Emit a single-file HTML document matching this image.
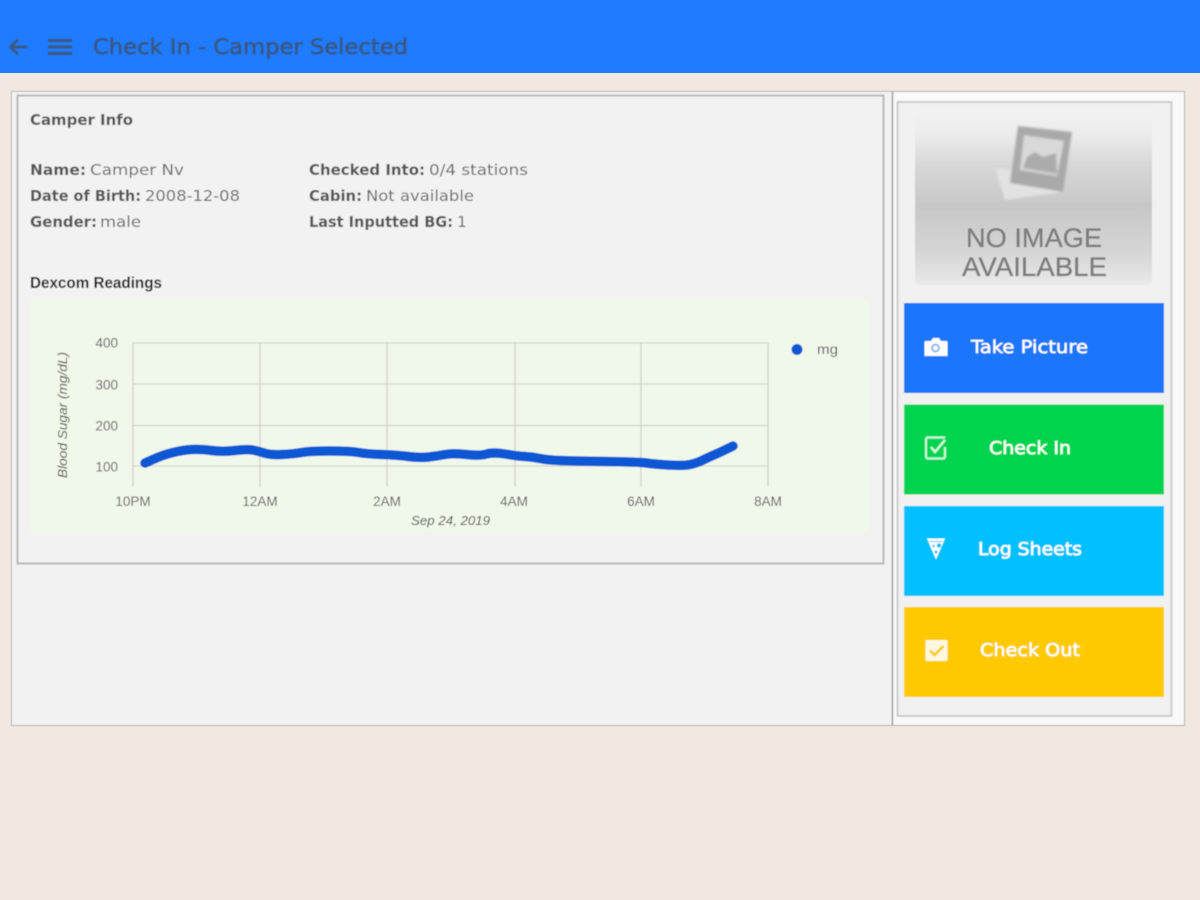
<!DOCTYPE html>
<html><head><meta charset="utf-8"><title>Check In - Camper Selected</title>
<style>html,body{margin:0;padding:0;background:#f1e9df;width:1200px;height:900px;overflow:hidden}svg{display:block}
.m{font-family:"DejaVu Sans","Liberation Sans",sans-serif}
.a{font-family:"Liberation Sans",sans-serif}
</style></head><body>
<svg width="1200" height="900" viewBox="0 0 1200 900" xmlns="http://www.w3.org/2000/svg">
<defs>
<filter id="b" x="-5%" y="-5%" width="110%" height="110%"><feGaussianBlur stdDeviation="0.55"/></filter>
<filter id="b2" x="-10%" y="-10%" width="120%" height="120%"><feGaussianBlur stdDeviation="1"/></filter>
<linearGradient id="g" x1="0" y1="0" x2="0" y2="1"><stop offset="0" stop-color="#f3f3f3"/><stop offset=".17" stop-color="#eaeaea"/><stop offset=".3" stop-color="#d9d9d9"/><stop offset=".55" stop-color="#c8c8c8"/><stop offset=".8" stop-color="#d4d4d4"/><stop offset="1" stop-color="#e9e9e9"/></linearGradient>
</defs>
<rect width="1200" height="900" fill="#f1e9df"/>
<rect width="1200" height="73" fill="#1f7bff"/>
<g filter="url(#b)">
<!-- header -->
<path d="M27 47H11M18 39.500l-7.500 7.500 7.500 7.500" fill="none" stroke="#3d5880" stroke-width="2.800"/>
<path d="M48 40.500H72M48 47H72M48 53.500H72" stroke="#3d5880" stroke-width="3"/>
<text x="93" y="54" class="m" font-size="21" fill="#3a5680" stroke="#3a5680" stroke-width=".45" textLength="315" lengthAdjust="spacingAndGlyphs">Check In - Camper Selected</text>
<!-- outer panel -->
<rect x="11.500" y="91.500" width="1173" height="634" fill="#f9f9f9" stroke="#b0b0b0"/>
<rect x="13" y="93" width="878" height="632" fill="#f2f2f2"/>
<rect x="17.500" y="95.500" width="866" height="468" fill="#f2f2f2" stroke="#b8b8b8" stroke-width="2"/>
<rect x="891.500" y="92" width="1.800" height="633" fill="#a9a9a9"/>
<rect x="897.500" y="102" width="274" height="614" fill="#f1f1f1" stroke="#c9c9c9" stroke-width="1.800"/>
<!-- camper info -->
<g class="m" font-size="15.500" fill="#555">
<text x="30" y="125" font-weight="bold" textLength="103" lengthAdjust="spacingAndGlyphs">Camper Info</text>
<text x="30" y="175" font-weight="bold" textLength="56" lengthAdjust="spacingAndGlyphs">Name:</text>
<text x="90" y="175" fill="#6a6a6a" textLength="94" lengthAdjust="spacingAndGlyphs">Camper Nv</text>
<text x="30" y="201" font-weight="bold" textLength="111" lengthAdjust="spacingAndGlyphs">Date of Birth:</text>
<text x="145" y="201" fill="#6a6a6a" textLength="95" lengthAdjust="spacingAndGlyphs">2008-12-08</text>
<text x="30" y="227" font-weight="bold" textLength="67" lengthAdjust="spacingAndGlyphs">Gender:</text>
<text x="100" y="227" fill="#6a6a6a" textLength="41" lengthAdjust="spacingAndGlyphs">male</text>
<text x="309" y="175" font-weight="bold" textLength="116" lengthAdjust="spacingAndGlyphs">Checked Into:</text>
<text x="429" y="175" fill="#6a6a6a" textLength="99" lengthAdjust="spacingAndGlyphs">0/4 stations</text>
<text x="309" y="201" font-weight="bold" textLength="53" lengthAdjust="spacingAndGlyphs">Cabin:</text>
<text x="366" y="201" fill="#6a6a6a" textLength="108" lengthAdjust="spacingAndGlyphs">Not available</text>
<text x="309" y="227" font-weight="bold" textLength="144" lengthAdjust="spacingAndGlyphs">Last Inputted BG:</text>
<text x="457" y="227" fill="#6a6a6a">1</text>
</g>
<text x="30" y="288" class="a" font-size="15.500" font-weight="bold" fill="#1c1c1c" textLength="132" lengthAdjust="spacingAndGlyphs">Dexcom Readings</text>
<!-- chart -->
<rect x="30" y="299" width="840" height="234" fill="#f0f8ea"/>
<g stroke="#c9cdc5" stroke-width="1.100" fill="none">
<path d="M133 343H768M133 384H768M133 425.500H768M133 466H768"/>
<path d="M133 343V487M260 343V487M387 343V487M515 343V487M641 343V487M768 343V487"/>
</g>
<g class="a" font-size="13.500" fill="#5e5e5e" text-anchor="end">
<text x="118" y="347.500">400</text><text x="118" y="389.500">300</text><text x="118" y="430.500">200</text><text x="118" y="471.500">100</text>
</g>
<g class="a" font-size="13.500" fill="#5e5e5e" text-anchor="middle">
<text x="133" y="506">10PM</text><text x="260" y="506">12AM</text><text x="387" y="506">2AM</text><text x="514" y="506">4AM</text><text x="641" y="506">6AM</text><text x="768" y="506">8AM</text>
</g>
<text x="411" y="525" class="a" font-size="13" font-style="italic" fill="#4a4a4a" textLength="79" lengthAdjust="spacingAndGlyphs">Sep 24, 2019</text>
<text transform="translate(67 478) rotate(-90)" class="a" font-size="13" font-style="italic" fill="#4a4a4a" textLength="126" lengthAdjust="spacingAndGlyphs">Blood Sugar (mg/dL)</text>
<path d="M145 463L154 459Q163 455 173 452.500Q183 450 191.500 449.500Q200 449 211.500 450.500Q223 452 235 450.500Q247 449 252.500 450Q258 451 264 453Q270 455 281.500 454.500Q293 454 301.500 452.500Q310 451 330 451Q350 451 358.500 452.500Q367 454 382 454.500Q397 455 408.500 456.500Q420 458 428.500 457Q437 456 445 454.500Q453 453 466.500 454.500Q480 456 486.500 454Q493 452 505 454Q517 456 525 456.500Q533 457 540 458.500Q547 460 560 460.500Q573 461 606.500 461.500Q640 462 646.500 463Q653 464 668 465Q683 466 690 464.500Q697 463 702 460.500Q707 458 715 454.500Q723 451 733 446" fill="none" stroke="#0f57d4" stroke-width="9.500" stroke-linecap="round" stroke-linejoin="round"/>
<circle cx="797" cy="349.500" r="5.500" fill="#0f57d4"/>
<text x="817" y="354" class="a" font-size="13.500" fill="#5e5e5e" textLength="21" lengthAdjust="spacingAndGlyphs">mg</text>
<!-- placeholder image -->
<rect x="915" y="108" width="237" height="177" rx="5" fill="url(#g)"/>
<g filter="url(#b2)">
<path d="M995 168L1005 200L1063 192L1010 170Z" fill="#e2e2e2"/>
<path d="M1018 126L1072 132L1063 192L1010 183Z" fill="#a9a9a9"/>
<path d="M1024 135L1064 141L1057 176L1020 170Z" fill="#d9d9d9"/>
<path d="M1023 168L1027 157L1035 152L1043 157L1056 153L1057 174Z" fill="#ababab"/>
</g>
<g class="a" font-size="27" fill="#7c7c7c" stroke="#7c7c7c" stroke-width=".35">
<text x="966" y="247" textLength="136" lengthAdjust="spacingAndGlyphs">NO IMAGE</text>
<text x="962" y="276" textLength="145" lengthAdjust="spacingAndGlyphs">AVAILABLE</text>
</g>
<!-- buttons -->
<rect x="904" y="303" width="260" height="90" fill="#1b76fb"/>
<rect x="904" y="404.500" width="260" height="90" fill="#00d44f"/>
<rect x="904" y="506" width="260" height="90" fill="#00c0ff"/>
<rect x="904" y="607" width="260" height="90" fill="#ffc905"/>
<g class="m" font-size="17.500" fill="#fff" stroke="#fff" stroke-width=".45">
<text x="971" y="353" textLength="117" lengthAdjust="spacingAndGlyphs">Take Picture</text>
<text x="989" y="454" textLength="82" lengthAdjust="spacingAndGlyphs">Check In</text>
<text x="978" y="555" textLength="104" lengthAdjust="spacingAndGlyphs">Log Sheets</text>
<text x="980" y="656" textLength="100" lengthAdjust="spacingAndGlyphs">Check Out</text>
</g>
<!-- camera -->
<path d="M926 341h5l2-3h6l2 3h5a1.500 1.500 0 0 1 1.500 1.500V356h-23V342.500A1.500 1.500 0 0 1 926 341Z" fill="#fff"/>
<circle cx="935.500" cy="348" r="4.500" fill="#8fb8f2"/>
<circle cx="935.500" cy="348" r="2.400" fill="#fff"/>
<!-- check in -->
<path d="M945 447v9.500a2 2 0 0 1-2 2h-15a2 2 0 0 1-2-2v-17a2 2 0 0 1 2-2h17" fill="none" stroke="#c8f7d8" stroke-width="2.200"/>
<path d="M931 447l4 5 10-12" fill="none" stroke="#d8fbe4" stroke-width="2.200"/>
<!-- pizza -->
<path d="M927 538.500h18l-9 21Z" fill="#fff"/>
<path d="M929.500 541.500h13" stroke="#00c0ff" stroke-width="1"/>
<circle cx="939" cy="545.500" r="2.200" fill="#00c0ff"/><circle cx="933.500" cy="546" r="1.200" fill="#00c0ff"/><circle cx="936" cy="552" r="1.500" fill="#00c0ff"/>
<!-- check out -->
<rect x="925.500" y="640" width="22" height="21" rx="1.500" fill="#fff8e0"/>
<path d="M930 650.500l4.500 4.500 9-9" fill="none" stroke="#ffc905" stroke-width="2.600"/>
</g>
</svg>
</body></html>
